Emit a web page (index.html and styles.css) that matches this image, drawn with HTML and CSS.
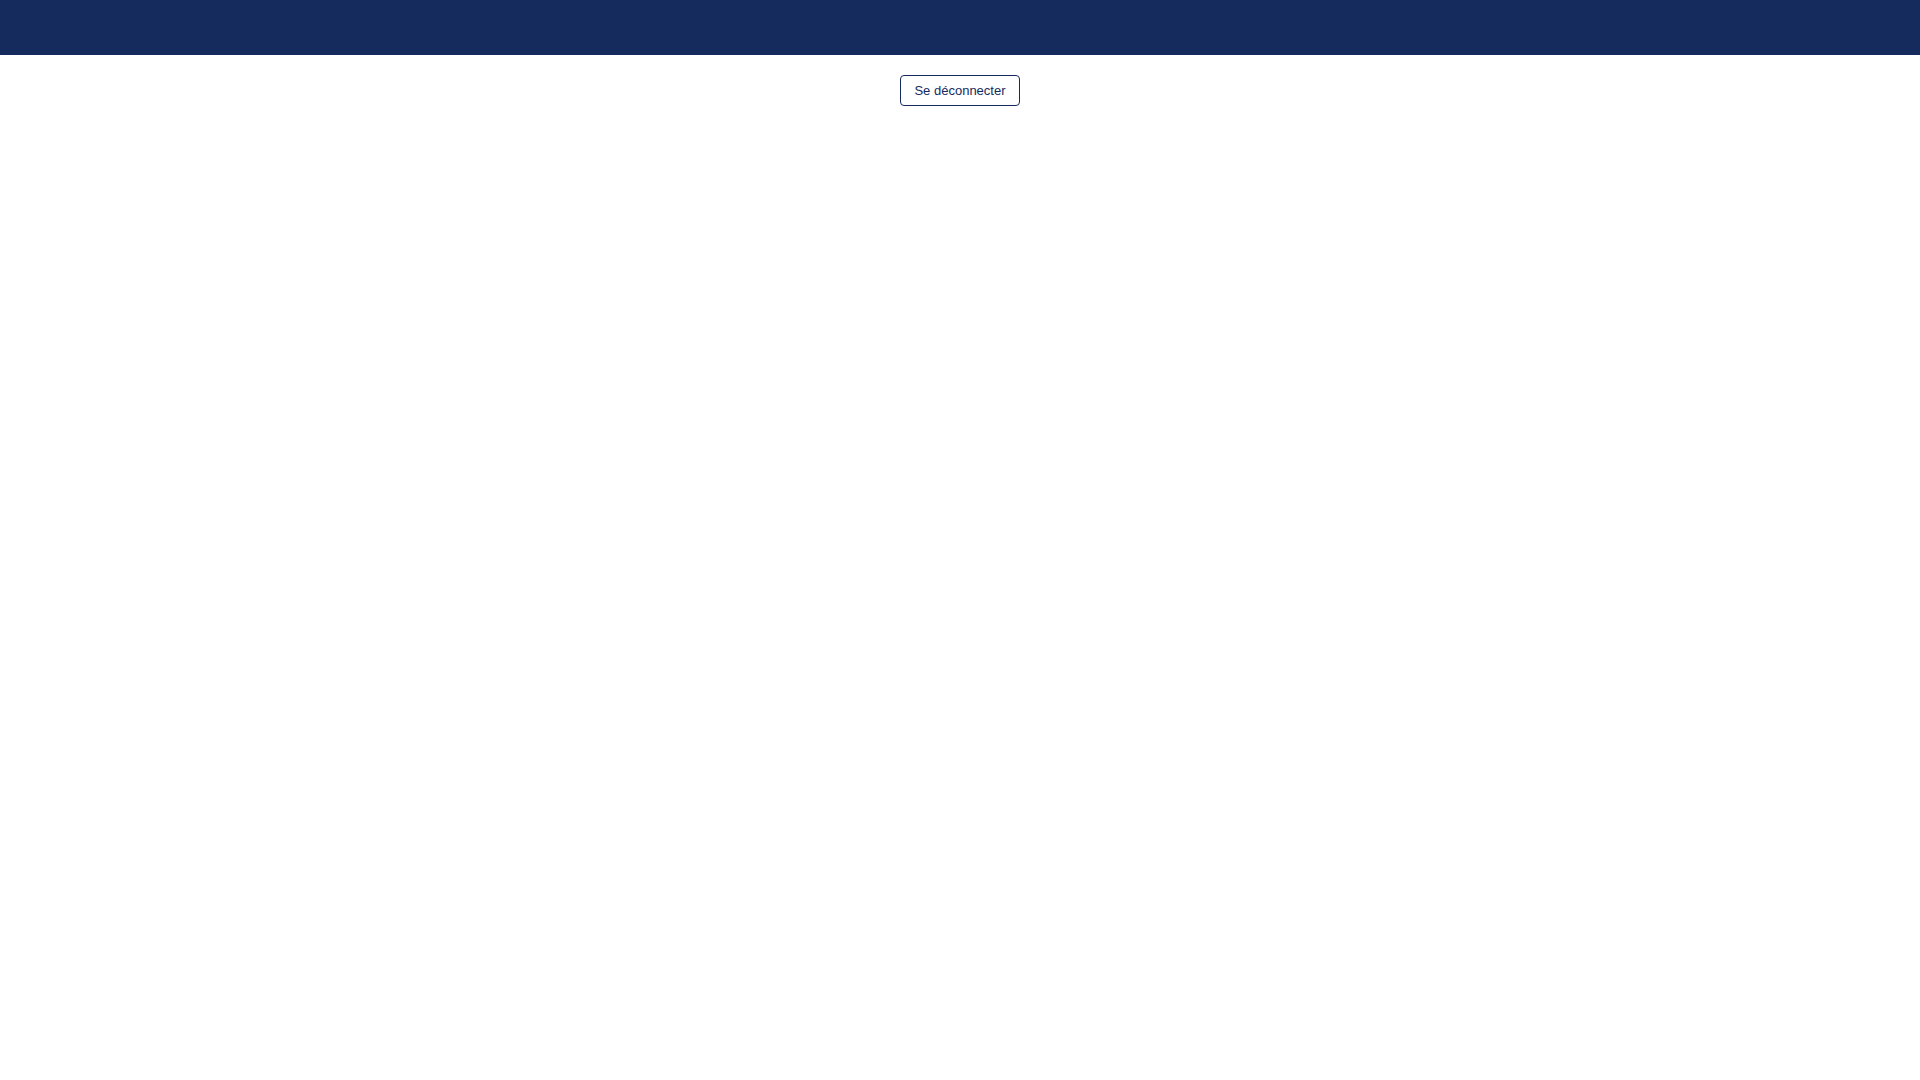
FILE: index.html
```html
<!DOCTYPE html>
<html lang="fr">
<head>
<meta charset="utf-8">
<title>Se déconnecter</title>
<link rel="stylesheet" href="styles.css">
</head>
<body>
<header class="topbar"></header>
<main class="content">
  <button class="logout" type="button">Se déconnecter</button>
</main>
</body>
</html>
```
FILE: styles.css
```css
html, body {
  margin: 0;
  padding: 0;
  background: #ffffff;
  font-family: "Liberation Sans", Arial, sans-serif;
}
.topbar {
  height: 55px;
  background: #152b5e;
}
.content {
  display: flex;
  justify-content: center;
  padding-top: 20px;
}
.logout {
  box-sizing: border-box;
  width: 120px;
  height: 31px;
  padding: 0;
  border: 1px solid #152b5e;
  border-radius: 4px;
  background: #ffffff;
  color: #152b5e;
  font-family: "Liberation Sans", Arial, sans-serif;
  font-size: 13px;
  font-weight: 400;
  line-height: 29px;
  text-align: center;
  white-space: nowrap;
  cursor: pointer;
}
```
